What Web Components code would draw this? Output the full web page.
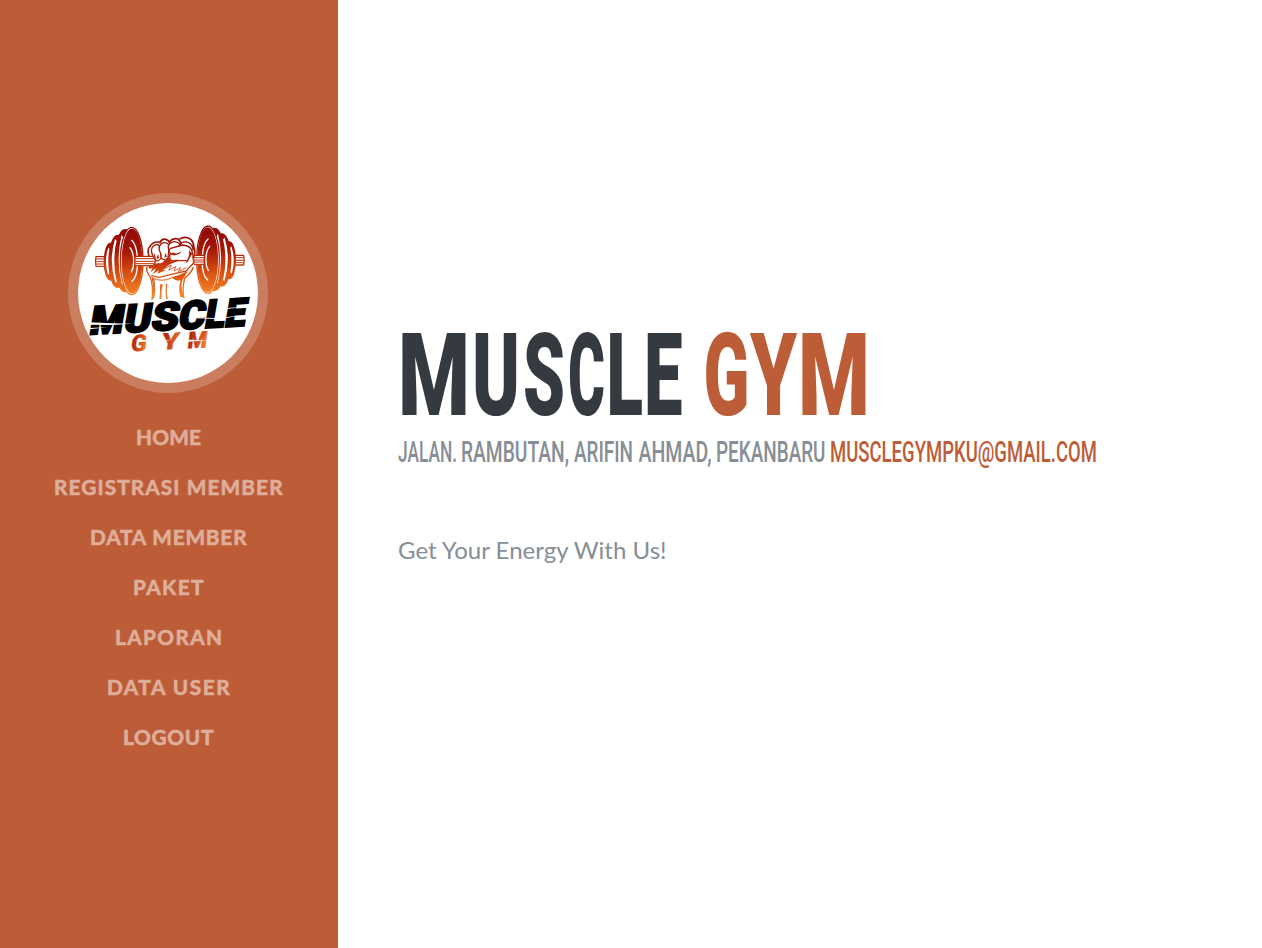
<!DOCTYPE html>
<html lang="id">
<head>
<meta charset="utf-8">
<title>Muscle Gym</title>
<style>html,body{margin:0;height:100%;background:#fff}</style>
</head>
<body>
<gym-page></gym-page>
<script>
const define = (name, html, setup) => customElements.define(name, class extends HTMLElement {
  constructor() { super(); this.attachShadow({mode: 'open'}).innerHTML = html; }
  connectedCallback() { if (setup) setup(this, this.shadowRoot); }
});

/* One line of text set to exact widths.
   runs: [text, x, width, colour?]; adjust: spacing | spacingAndGlyphs */
customElements.define('fit-text', class extends HTMLElement {
  connectedCallback() {
    const a = n => this.getAttribute(n);
    const adjust = a('adjust') || 'spacingAndGlyphs';
    const runs = JSON.parse(a('runs'));
    const body = runs.map(([t, x, w, c]) => t === ' ' ? ' ' : `<tspan x="${x}" textLength="${w}" lengthAdjust="${adjust}"${c ? ` fill="${c}"` : ''}>${t}</tspan>`).join('');
    this.attachShadow({mode: 'open'}).innerHTML = `<style>:host{display:block}svg{display:block;overflow:visible}</style>
      <svg width="${a('w')}" height="${a('h')}" fill="currentColor" stroke="currentColor" stroke-width="${a('embolden') || 0}"><text y="${a('base')}">${body}</text></svg>`;
  }
});

define('gym-logo', `<style>
:host{display:block;box-sizing:border-box;width:200px;height:200px;border-radius:50%;border:10px solid rgba(255,255,255,.2);background:#fff;background-clip:padding-box;overflow:hidden}
svg{display:block;width:180px;height:180px}
text{font-family:Roboto,"Liberation Sans",sans-serif;font-weight:900}
</style>
<svg viewBox="54 54 540 540">
<defs>
<linearGradient id="g" gradientUnits="userSpaceOnUse" x1="0" y1="125" x2="0" y2="340"><stop offset="0" stop-color="#8e0908"/><stop offset=".32" stop-color="#a31405"/><stop offset=".68" stop-color="#dd5413"/><stop offset="1" stop-color="#f58a2c"/></linearGradient>
<linearGradient id="h" x1="0" y1="0" x2="1" y2=".25"><stop offset="0" stop-color="#a31908"/><stop offset=".5" stop-color="#c43e12"/><stop offset="1" stop-color="#f47a20"/></linearGradient>
<g id="plates" stroke="url(#g)" stroke-width="4">
<path d="M108 215h32v29h-32q-3-15 0-29z" fill="#fff"/><path d="M110 222h28M110 230h28M110 237h28" stroke-width="3"/>
<ellipse cx="151" cy="230" rx="18" ry="55" fill="url(#g)"/>
<path d="M145 188q-14 40-1 82q7-5 6-12-8-30 1-64z" fill="#fff" stroke="none"/>
<ellipse cx="173" cy="229" rx="26" ry="78" fill="url(#g)"/>
<path d="M165 162q-20 64 1 131q9-6 8-16-11-48 1-104z" fill="#fff" stroke="none"/>
<ellipse cx="195" cy="227" rx="30" ry="93" fill="url(#g)"/>
<path d="M185 150q-19 78 1 149q9-8 8-18-11-58-1-119z" fill="#fff" stroke="none"/>
<ellipse cx="215" cy="228" rx="34" ry="101" fill="#fff"/>
<ellipse cx="216" cy="228" rx="29" ry="95" fill="url(#g)"/>
<path d="M215 166c20 17 26 101 1 123M210 188c13 15 15 54 4 73" fill="none" stroke="#fff" stroke-width="4"/>
</g>
</defs>
<g fill="none" stroke-linecap="round" stroke-linejoin="round">
<use href="#plates"/>
<use href="#plates" transform="translate(659 -4) scale(-1 1)"/>
<path d="M401 211h32v27h-32z" fill="#fff" stroke="url(#g)" stroke-width="4"/><path d="M403 218h29M403 225h29M403 231h29" stroke="url(#g)" stroke-width="3"/>
<path d="M276 341q6-36-5-67-13-17-10-29l15-10-4-52q5-15 23-14l16-6q16-6 27 7l49 8 17 26-4 51-27 25q-7 25-2 56l-17-6-23 2-34-8z" fill="#fff"/>
<g stroke="url(#g)" stroke-width="4">
<path d="M276 344q5-42-6-69-13-18-9-29"/><path d="M399 248q-7 18-24 30-9 26-4 59"/>
<path d="M267 213q-7-21 3-28 6-15 27-14M300 173q5-13 18-10 8 2 10 10M328 170q12-13 27-8l8 12M361 161q19-9 32 3 10 10 8 26M398 181q12 15 2 37" stroke-width="5"/>
<path d="M278 211q-9-20 3-29 13-8 21 5l1 33q-9 12-17 4l-3-15" fill="#fff"/>
<path d="M303 207q-12-20 1-31 14-8 24 5l-4 38q-10 11-20 0z" fill="#fff"/>
<path d="M329 198q-9-13 1-23 17-12 33 5l-4 15-27 9-7 13" fill="#fff"/>
<path d="M335 207q-14-8-3-17l36-10q26 2 29 22l-15 25-35-1q-21 6-17-18z" fill="#fff"/>
<path d="M357 181q9-13 25-10 16 6 17 25"/>
<path d="M398 205l3 29-23 24-47 11-33 8-23-5"/>
</g>
<path d="M265 245l12-9 28-2 14-12 10-3q4 13 14 9l14-1-26 10-22 16 7 3-24 10 5-11-18 12 9-17-17 12 7-14-9 4zM337 202q13 8 28-3-8 14-29 11zM387 193l8 13-12 26-8 2q15-15 12-41zM294 207l4 12-9 3zM316 203l5 12-8 3z" fill="url(#g)"/>
<path d="M318 239l-5 13 21-12-8 16 21-11-5 13 20-10-7 12 23-12" stroke="url(#g)" stroke-width="2.5"/>
<path d="M334 277q24-5 49-19l-14 25q-12 21 5 55l-13-2q-7-28 1-50-14 4-28-9zM274 274l9 9q6 30-1 58l-6 2q6-38-2-69zM300 298q1 25-2 44h7q-2-20 3-44zM318 296q-3 22 0 45l6 2q-6-26-2-47z" fill="url(#g)"/>
<path d="M277 279q25 14 58 0" stroke="url(#g)" stroke-width="3"/>
<path d="M225 214h54l8 14-7 14h-55z" fill="#fff" stroke="url(#g)" stroke-width="4"/><path d="M228 221h52M228 229h55M228 236h52" stroke="url(#g)" stroke-width="3"/>
</g>
<g transform="translate(79 449) rotate(-3.2) skewX(-13)" fill="#000" stroke="#000" stroke-width="6">
<text font-size="117" y="0"><tspan x="6" textLength="102" lengthAdjust="spacingAndGlyphs">M</tspan><tspan x="109" textLength="82" lengthAdjust="spacingAndGlyphs">U</tspan><tspan x="191" textLength="82" lengthAdjust="spacingAndGlyphs">S</tspan><tspan x="273" textLength="79" lengthAdjust="spacingAndGlyphs">C</tspan><tspan x="352" textLength="60" lengthAdjust="spacingAndGlyphs">L</tspan><tspan x="412" textLength="63" lengthAdjust="spacingAndGlyphs">E</tspan></text>
</g>
<path d="M88 412l66 3 64 1-60 4-72-1zM86 429l58-2-57 6zM386 397l80 2 90-8-82 11-91-3zM500 369l58-4-58 7z" fill="#fff"/>
<g transform="translate(9 500) rotate(-3) skewX(-10)" font-size="69" fill="url(#h)" stroke="#c43e12" stroke-width="1">
<text x="203" y="10" textLength="47" lengthAdjust="spacingAndGlyphs">G</text><text x="296" y="10" textLength="52" lengthAdjust="spacingAndGlyphs">Y</text><text x="373" y="10" textLength="59" lengthAdjust="spacingAndGlyphs">M</text>
</g>
<path d="M304 467l40-4-40 7zM382 464l62 2-62 4z" fill="#fff"/>
</svg>`);

define('gym-nav', `<style>
:host{display:flex;flex-direction:column;align-items:center;margin-top:20px;color:#deae9b;font:700 20.8px Lato,"Open Sans",sans-serif}
a{display:block;height:50px;color:inherit;text-decoration:none}
</style><slot></slot>`, (el, root) => {
  const items = [['HOME',65],['REGISTRASI MEMBER',228.5],['DATA MEMBER',156.5],['PAKET',70.5],['LAPORAN',107],['DATA USER',122.5],['LOGOUT',90.5]];
  root.querySelector('slot').insertAdjacentHTML('beforebegin', items.map(([t, w]) => `<a href="#"><fit-text adjust="spacing" embolden=".6" w="${w}" h="50" base="32" runs='[["${t}",0,${w}]]'></fit-text></a>`).join(''));
});

define('gym-sidebar', `<style>
:host{box-sizing:border-box;width:338px;flex:none;background:#bd5d38;padding:193px 2px 0 0;display:flex;flex-direction:column;align-items:center}
</style><slot></slot>`);

define('gym-hero', `<style>
:host{display:block;flex:1;padding:320px 0 0 60px;min-width:0;box-sizing:border-box}
.title{font:900 115.5px Roboto,sans-serif;color:#343a40}
.contact{font:500 29.5px Roboto,sans-serif;color:#868e96}
.lead{font:400 23.7px Lato,sans-serif;color:#868e96;margin-top:50px}
</style>
<fit-text class="title" w="480" h="110" base="95" runs='[["M",0,72],["U",74,48],["S",125,42],["C",170,37],["L",208.5,36.5],["E",246,38.5],[" "],["G",305.5,46,"#bd5d38"],["Y",352,47,"#bd5d38"],["M",400,72,"#bd5d38"]]'></fit-text>
<fit-text class="contact" w="700" h="50" base="32" runs='[["JALAN.",0,59],[" "],["RAMBUTAN,",63,108],[" "],["ARIFIN",176,59],[" "],["AHMAD,",240.5,73],[" "],["PEKANBARU",318,109.5],[" "],["MUSCLEGYMPKU@GMAIL.COM",432,267,"#bd5d38"]]'></fit-text>
<fit-text class="lead" w="300" h="45" base="29" runs='[["Get Your Energy With Us!",0,268.5]]'></fit-text>`);

define('gym-page', `<style>
:host{display:flex;height:948px;width:100%;overflow:hidden;background:#fff}
</style>
<gym-sidebar><gym-logo></gym-logo><gym-nav></gym-nav></gym-sidebar>
<gym-hero></gym-hero>`);
</script>
</body>
</html>
